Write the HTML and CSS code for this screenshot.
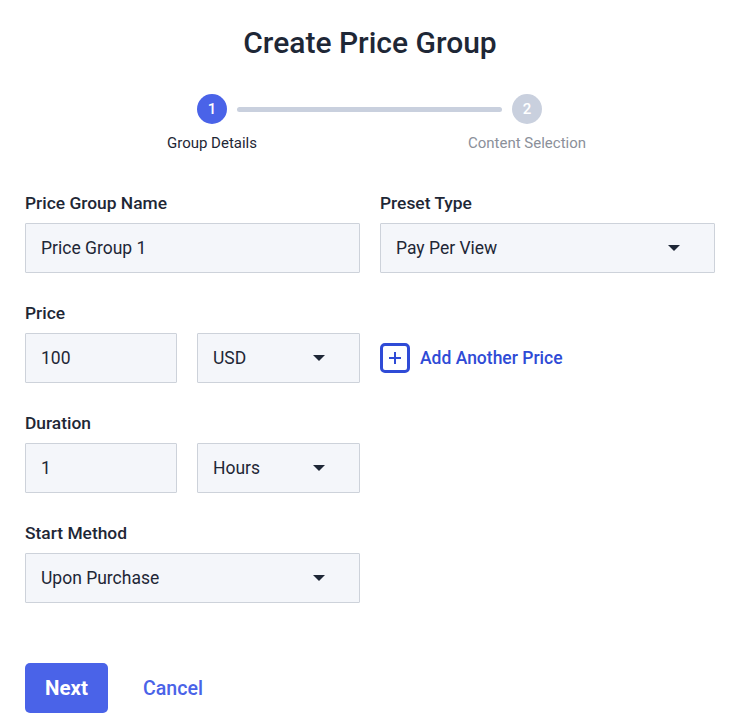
FILE: index.html
```html
<!DOCTYPE html>
<html>
<head>
<meta charset="utf-8">
<link rel="stylesheet" href="styles.css">
</head>
<body>
<div class="page">
  <h1 class="title">Create Price Group</h1>
  <div class="stepper">
    <div class="step active">
      <div class="dot">1</div>
      <div class="step-label">Group Details</div>
    </div>
    <div class="bar"></div>
    <div class="step">
      <div class="dot">2</div>
      <div class="step-label">Content Selection</div>
    </div>
  </div>

  <div class="row two">
    <div class="field">
      <label class="label">Price Group Name</label>
      <div class="input">Price Group 1</div>
    </div>
    <div class="field">
      <label class="label">Preset Type</label>
      <div class="input select">Pay Per View<span class="caret"></span></div>
    </div>
  </div>

  <div class="field">
    <label class="label">Price</label>
    <div class="inline">
      <div class="input small">100</div>
      <div class="input select medium">USD<span class="caret"></span></div>
      <a class="add">
        <span class="add-icon"><svg width="14" height="14" viewBox="0 0 14 14"><path d="M7 1v12M1 7h12" stroke="#2f4bd6" stroke-width="2" fill="none"/></svg></span>
        Add Another Price
      </a>
    </div>
  </div>

  <div class="field">
    <label class="label">Duration</label>
    <div class="inline">
      <div class="input small">1</div>
      <div class="input select medium">Hours<span class="caret"></span></div>
    </div>
  </div>

  <div class="field">
    <label class="label">Start Method</label>
    <div class="input select wide">Upon Purchase<span class="caret"></span></div>
  </div>

  <div class="actions">
    <button class="btn-primary">Next</button>
    <button class="btn-link">Cancel</button>
  </div>
</div>
</body>
</html>
```

FILE: styles.css
```css
* { box-sizing: border-box; }
body {
  margin: 0;
  font-family: Roboto, "Liberation Sans", sans-serif;
  color: #1e2736;
  background: #fff;
}
.page {
  padding: 24px 16px 0 25px;
}
.title {
  margin: 0;
  text-align: center;
  font-size: 30px;
  font-weight: 500;
  line-height: 38px;
  color: #1e2736;
}
.stepper {
  display: flex;
  justify-content: center;
  align-items: flex-start;
  margin-top: 32px;
  margin-left: -1px;
}
.step {
  display: flex;
  flex-direction: column;
  align-items: center;
  width: 30px;
  position: relative;
}
.dot {
  width: 30px;
  height: 30px;
  border-radius: 50%;
  background: #c9d0de;
  color: #fff;
  font-size: 15px;
  font-weight: 500;
  display: flex;
  align-items: center;
  justify-content: center;
}
.step.active .dot { background: #4a63e8; }
.step-label {
  margin-top: 10px;
  white-space: nowrap;
  font-size: 15px;
  line-height: 19px;
  color: #8b909a;
  display: flex;
  justify-content: center;
  width: 200px;
}
.step.active .step-label { color: #1e2736; }
.bar {
  width: 265px;
  height: 5px;
  border-radius: 3px;
  background: #c9d0de;
  margin: 13px 10px 0;
}
.row.two {
  display: grid;
  grid-template-columns: 335px 335px;
  column-gap: 20px;
  margin-top: 40px;
}
.field {
  margin-top: 30px;
}
.row.two .field { margin-top: 0; }
.label {
  display: block;
  font-size: 17.4px;
  font-weight: 500;
  line-height: 20px;
  color: #1e2736;
  margin-bottom: 10px;
}
.input {
  height: 50px;
  border: 1px solid #cdd2da;
  background: #f4f6fa;
  border-radius: 1px;
  padding: 0 15px;
  font-size: 17.5px;
  color: #1e2736;
  display: flex;
  align-items: center;
}
.select {
  justify-content: space-between;
  padding-right: 34px;
}
.caret {
  width: 0;
  height: 0;
  border-left: 6px solid transparent;
  border-right: 6px solid transparent;
  border-top: 6px solid #1e2736;
}
.inline {
  display: flex;
  align-items: center;
}
.small { width: 152px; }
.medium { width: 163px; margin-left: 20px; }
.wide { width: 335px; }
.add {
  display: flex;
  align-items: center;
  margin-left: 20px;
  color: #2f4bd6;
  font-size: 17.5px;
  font-weight: 500;
  cursor: pointer;
}
.add-icon {
  width: 30px;
  height: 30px;
  border: 3px solid #2f4bd6;
  border-radius: 5px;
  display: flex;
  align-items: center;
  justify-content: center;
  margin-right: 10px;
}
.actions {
  display: flex;
  align-items: center;
  margin-top: 60px;
}
.btn-primary {
  width: 83px;
  height: 50px;
  border: none;
  border-radius: 5px;
  background: #4a63e8;
  color: #fff;
  font-family: inherit;
  font-size: 20.5px;
  font-weight: 700;
}
.btn-link {
  border: none;
  background: none;
  margin-left: 25px;
  padding: 0 10px;
  color: #4a63e8;
  font-family: inherit;
  font-size: 19.6px;
  font-weight: 500;
}
```
